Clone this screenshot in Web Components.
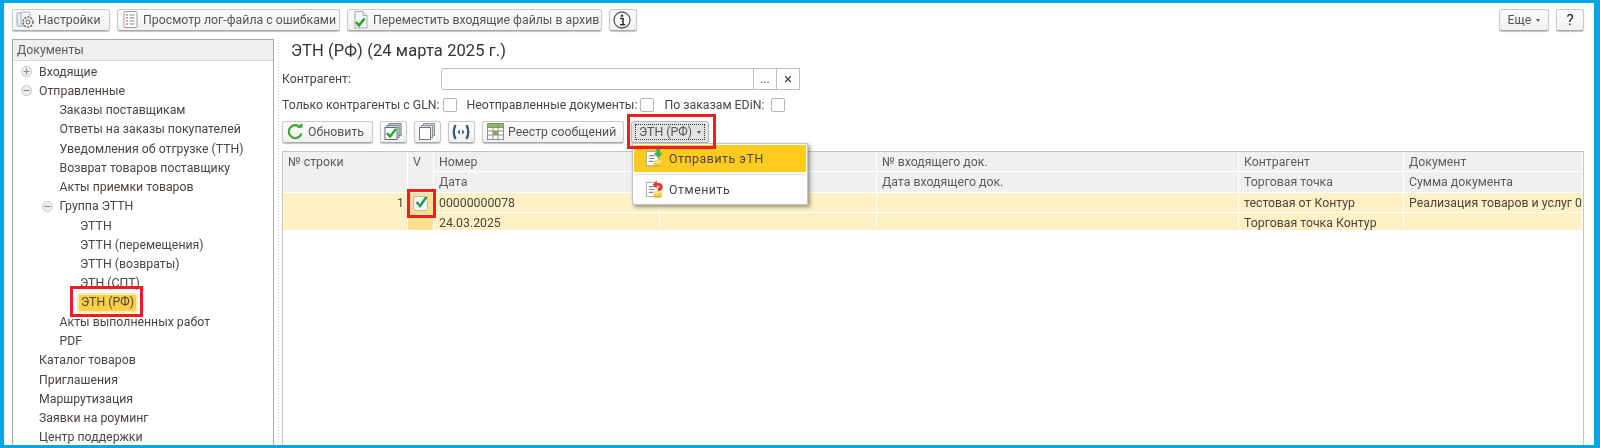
<!DOCTYPE html>
<html lang="ru">
<head>
<meta charset="utf-8">
<title>ЭТН (РФ)</title>
<style>
  html, body { margin: 0; padding: 0; background: #fff; }
  body { width: 1600px; height: 448px; overflow: hidden; font: 12.3px Roboto, "Liberation Sans", sans-serif; color: #4c4540; }
</style>
</head>
<body>
<edi-app>
  <tool-bar slot="top">
    <tool-button icon="settings" w="98">Настройки</tool-button>
    <tool-button icon="log" w="223">Просмотр лог-файла с ошибками</tool-button>
    <tool-button icon="archive" w="255">Переместить входящие файлы в архив</tool-button>
    <tool-button icon="info" w="28"></tool-button>
    <tool-spacer></tool-spacer>
    <tool-button w="50" menu>Еще</tool-button>
    <tool-button w="28" strong>?</tool-button>
  </tool-bar>

  <nav-panel slot="nav" title="Документы">
    <tree-row level="0" toggle="plus">Входящие</tree-row>
    <tree-row level="0" toggle="minus">Отправленные</tree-row>
    <tree-row level="1">Заказы поставщикам</tree-row>
    <tree-row level="1">Ответы на заказы покупателей</tree-row>
    <tree-row level="1">Уведомления об отгрузке (ТТН)</tree-row>
    <tree-row level="1">Возврат товаров поставщику</tree-row>
    <tree-row level="1">Акты приемки товаров</tree-row>
    <tree-row level="1" toggle="minus">Группа ЭТТН</tree-row>
    <tree-row level="2">ЭТТН</tree-row>
    <tree-row level="2">ЭТТН (перемещения)</tree-row>
    <tree-row level="2">ЭТТН (возвраты)</tree-row>
    <tree-row level="2">ЭТН (СПТ)</tree-row>
    <tree-row level="2" current>ЭТН (РФ)</tree-row>
    <tree-row level="1">Акты выполненных работ</tree-row>
    <tree-row level="1">PDF</tree-row>
    <tree-row level="0">Каталог товаров</tree-row>
    <tree-row level="0">Приглашения</tree-row>
    <tree-row level="0">Маршрутизация</tree-row>
    <tree-row level="0">Заявки на роуминг</tree-row>
    <tree-row level="0">Центр поддержки</tree-row>
  </nav-panel>

  <doc-view slot="main">
    <span slot="title">ЭТН (РФ) (24 марта 2025 г.)</span>
    <tool-bar slot="actions" compact>
      <tool-button icon="refresh" w="91">Обновить</tool-button>
      <tool-button icon="checks" w="27"></tool-button>
      <tool-button icon="copies" w="27"></tool-button>
      <tool-button icon="signal" w="27"></tool-button>
      <tool-button icon="table" w="142">Реестр сообщений</tool-button>
      <tool-button w="78" menu pressed marked>ЭТН (РФ)</tool-button>
    </tool-bar>
    <data-grid slot="grid">
      <grid-cell head rows="2">№ строки</grid-cell>
      <grid-cell head rows="2">V</grid-cell>
      <grid-cell head>Номер</grid-cell>
      <grid-cell head></grid-cell>
      <grid-cell head>№ входящего док.</grid-cell>
      <grid-cell head>Контрагент</grid-cell>
      <grid-cell head>Документ</grid-cell>
      <grid-cell head>Дата</grid-cell>
      <grid-cell head></grid-cell>
      <grid-cell head>Дата входящего док.</grid-cell>
      <grid-cell head>Торговая точка</grid-cell>
      <grid-cell head>Сумма документа</grid-cell>

      <grid-cell rows="2" right>1</grid-cell>
      <grid-cell rows="2" accent><check-mark></check-mark></grid-cell>
      <grid-cell>00000000078</grid-cell>
      <grid-cell></grid-cell>
      <grid-cell></grid-cell>
      <grid-cell>тестовая от Контур</grid-cell>
      <grid-cell>Реализация товаров и услуг 0</grid-cell>
      <grid-cell>24.03.2025</grid-cell>
      <grid-cell></grid-cell>
      <grid-cell></grid-cell>
      <grid-cell>Торговая точка Контур</grid-cell>
      <grid-cell></grid-cell>
    </data-grid>
    <pop-menu slot="menu">
      <menu-item icon="send" active>Отправить эТН</menu-item>
      <menu-item icon="cancel">Отменить</menu-item>
    </pop-menu>
  </doc-view>
</edi-app>

<script>
const ICONS = {
  settings: `<rect x="1" y="3" width="9" height="13" rx="1" fill="#e8edf2" stroke="#9aa7b4"/><rect x="5" y="2" width="9" height="12" rx="1" fill="#f2f4f6" stroke="#aab4be"/><circle cx="12" cy="12" r="5" fill="#eee" stroke="#666" stroke-width="1.4" stroke-dasharray="2 1.2"/><circle cx="12" cy="12" r="2" fill="#fff" stroke="#666"/>`,
  log: `<rect x="3" y="1.5" width="13" height="16" rx="1" fill="#fff" stroke="#a09a96"/><path d="M5 5h2M5 8h2M5 11h2M5 14h2" stroke="#d2482f" stroke-width="1.2"/><path d="M8.5 5h5M8.5 8h5M8.5 11h5M8.5 14h5" stroke="#8a8480" stroke-width="1.2"/>`,
  archive: `<path d="M4 1.5h8l4 4v12.5h-12z" fill="#f6f7f8" stroke="#a3a8ad"/><path d="M12 1.5v4h4" fill="#e2e5e8" stroke="#a3a8ad"/><path d="M5 12l3 3.500 5.500-7" fill="none" stroke="#27a52c" stroke-width="2.600"/>`,
  info: `<circle cx="10" cy="10" r="8" fill="#fff" stroke="#555" stroke-width="1.300"/><circle cx="10" cy="5.700" r="1.300" fill="#333"/><path d="M8 8.500h3v6M8 14.800h5" fill="none" stroke="#333" stroke-width="1.600"/>`,
  refresh: `<path d="M15.500 11.500a6.500 6.500 0 1 1-1.700-6.600" fill="none" stroke="#3fa535" stroke-width="2.200"/><path d="M11 5.800h5.500v-5z" fill="#3fa535"/>`,
  checks: `<rect x="6" y="1.500" width="12" height="12" fill="#c2cfd6" stroke="#75838c"/><rect x="4" y="3.500" width="12" height="12" fill="#dbe3e8" stroke="#75838c"/><rect x="2" y="5.500" width="12" height="12" fill="#fff" stroke="#5f6e78"/><path d="M4 11l3 3.500 6-7.500" fill="none" stroke="#25a82c" stroke-width="2.400"/>`,
  copies: `<rect x="6.500" y="1.500" width="11" height="12" fill="#ccd3d8" stroke="#8b959c"/><rect x="4.500" y="3.500" width="11" height="12" fill="#e1e5e8" stroke="#8b959c"/><rect x="2.500" y="5.500" width="11" height="12" fill="#fff" stroke="#6e7880"/>`,
  signal: `<path d="M4.500 3q-3.500 7 0 14M15.500 3q3.500 7 0 14" fill="none" stroke="#2b5d86" stroke-width="2.300"/><path d="M6.500 10l2.400-2.600v5.200zM13.500 10l-2.400-2.600v5.200z" fill="#2b5d86"/>`,
  table: `<rect x="1.500" y="1.500" width="16" height="16" fill="#fff" stroke="#8f8f85"/><rect x="2" y="2" width="15" height="3.500" fill="#8bc34a"/><rect x="7" y="9" width="5" height="4" fill="#6dbb45"/><path d="M1.500 5.500h16M1.500 9h16M1.500 13h16M7 1.500v16M12 1.500v16" stroke="#8f8f85"/>`,
  send: `<path d="M2.500 2.500h10l3 3v12h-13z" fill="#fff" stroke="#9aa3aa"/><path d="M5 7h7M5 10h6M5 13h5" stroke="#7d8a96" stroke-width="1.300"/><ellipse cx="14.500" cy="17" rx="4.500" ry="1.800" fill="#d6b23a"/><rect x="10" y="13" width="9" height="4" fill="#f0d24b"/><ellipse cx="14.500" cy="13" rx="4.500" ry="1.800" fill="#f8e27a"/><path d="M13 0h4v4h3l-5 5.500-5-5.500h3z" fill="#3cb64a"/>`,
  cancel: `<path d="M2.500 2.500h10l3 3v12h-13z" fill="#fff" stroke="#9aa3aa"/><path d="M5 7h7M5 10h6M5 13h5" stroke="#7d8a96" stroke-width="1.300"/><ellipse cx="14.500" cy="17" rx="4.500" ry="1.800" fill="#d6b23a"/><rect x="10" y="13" width="9" height="4" fill="#f0d24b"/><ellipse cx="14.500" cy="13" rx="4.500" ry="1.800" fill="#f8e27a"/><path d="M9 5l4.500-4.500v2.700h2a4 4 0 0 1 0 8.300h-1v-3h.6a1.200 1.200 0 0 0 0-2.500h-1.600v3z" fill="#e8392e"/>`
};
function icon(name, size) {
  return `<svg width="${size}" height="${size}" viewBox="0 0 20 20" aria-hidden="true">${ICONS[name] || ""}</svg>`;
}

class EdiApp extends HTMLElement {
  constructor() {
    super();
    this.attachShadow({ mode: "open" }).innerHTML = `
      <style>
        :host { display: block; box-sizing: border-box; width: 1600px; height: 448px; overflow: hidden;
          border: solid #00a7e7; border-width: 3px 6px 3px 4px; background: #fff; }
        .wrap { filter: blur(.3px); }
        .top { padding: 6px 10px 0 8px; }
        .body { display: flex; margin-top: 8px; padding-left: 8px; height: 420px; }
        .split { flex: none; width: 8px; background: radial-gradient(circle, #cfcfcf 0.6px, transparent 0.8px) 3px 0 / 3px 3px repeat-y; }
      </style>
      <div class="wrap">
      <div class="top"><slot name="top"></slot></div>
      <div class="body">
        <slot name="nav"></slot>
        <div class="split"></div>
        <slot name="main"></slot>
      </div>
      </div>`;
  }
}

class ToolBar extends HTMLElement {
  constructor() {
    super();
    this.attachShadow({ mode: "open" }).innerHTML = `
      <style>
        :host { display: flex; gap: 7px; align-items: flex-start; }
      </style>
      <slot></slot>`;
  }
}

class ToolSpacer extends HTMLElement {
  constructor() {
    super();
    this.attachShadow({ mode: "open" }).innerHTML = `<style>:host { display: block; flex: 1; }</style>`;
  }
}

class ToolButton extends HTMLElement {
  connectedCallback() {
    if (this.shadowRoot) return;
    const name = this.getAttribute("icon");
    const empty = !this.textContent.trim();
    this.attachShadow({ mode: "open" }).innerHTML = `
      <style>
        :host { display: inline-flex; box-sizing: border-box; flex: none; width: ${this.getAttribute("w")}px; height: 22px; }
        .b { flex: 1; min-width: 0; display: flex; align-items: center; justify-content: ${empty || !name ? "center" : "flex-start"}; gap: 2px;
          padding: 0 ${empty ? 0 : 3}px; box-sizing: border-box; border: 1px solid #c9c9c9; border-bottom-color: #a9a9a9; border-radius: 3px;
          background: linear-gradient(#fdfdfd, #f1f1f1); box-shadow: 0 1px 1px #c4c4c4; color: #555; white-space: nowrap; }
        :host([pressed]) .b { background: #e3e3e3; border-color: #bbb; }
        :host([marked]) .in { border: 1px dotted #333; padding: 2px 4px; display: flex; gap: 4px; align-items: center; width: 100%; justify-content: center; box-sizing: border-box; height: 16px; }
        :host([strong]) .b { font-size: 15px; color: #222; }
        .caret { width: 0; height: 0; border: 2.500px solid transparent; border-top: 3px solid #555; border-bottom: 0; margin-left: 5px; }
        :host([marked]) .caret { margin-left: 1px; }
        svg { flex: none; }
      </style>
      <div class="b">${name ? icon(name, 20) : ""}<span class="in"><slot></slot>${this.hasAttribute("menu") ? '<span class="caret"></span>' : ""}</span></div>`;
    const inner = this.shadowRoot.querySelector(".in");
    if (!this.hasAttribute("marked")) inner.style.cssText = "display:inline-flex;align-items:center";
  }
}

class NavPanel extends HTMLElement {
  connectedCallback() {
    if (this.shadowRoot) return;
    this.attachShadow({ mode: "open" }).innerHTML = `
      <style>
        :host { display: block; flex: none; box-sizing: border-box; width: 262px; height: 420px; border: 1px solid #a8a8a8; }
        .h { height: 20px; line-height: 21px; padding-left: 4px; background: #efefef; border-bottom: 1px solid #d8d8d8; color: #5a5a5a; }
        .t { padding-top: 1px; }
      </style>
      <div class="h">${this.getAttribute("title")}</div>
      <div class="t"><slot></slot></div>`;
  }
}

class TreeRow extends HTMLElement {
  connectedCallback() {
    if (this.shadowRoot) return;
    const lvl = +this.getAttribute("level");
    const toggle = this.getAttribute("toggle");
    const bar = toggle === "plus" ? '<path d="M4.500 7.500h6M7.500 4.500v6" stroke="#8d8d8d" stroke-width="1.200"/>' : '<path d="M4.500 7.500h6" stroke="#8d8d8d" stroke-width="1.200"/>';
    this.attachShadow({ mode: "open" }).innerHTML = `
      <style>
        :host { display: flex; position: relative; align-items: center; height: 19.250px; padding-left: ${26 + lvl * 20.500}px; white-space: nowrap; }
        svg { position: absolute; left: ${lvl * 20.500 + 6}px; top: 2px; }
        :host([current]) .txt { background: #fbcf4a; box-shadow: 0 0 0 2px #fde9a8; margin-left: -1px; padding: 0 2px 1px; border-radius: 2px; height: 15px; line-height: 15px; }
        :host([current]) .mark { position: absolute; left: ${26 + lvl * 20.500 - 10}px; top: -7px; width: 67px; height: 25px; border: 3px solid #ee1c25; }
      </style>
      ${toggle ? `<svg width="15" height="15"><circle cx="7.500" cy="7.500" r="5" fill="#eee" stroke="#c6c6c6"/>${bar}</svg>` : ""}
      <span class="txt"><slot></slot></span>
      ${this.hasAttribute("current") ? '<span class="mark"></span>' : ""}`;
  }
}

class DocView extends HTMLElement {
  constructor() {
    super();
    this.attachShadow({ mode: "open" }).innerHTML = `
      <style>
        :host { display: block; position: relative; flex: 1; min-width: 0; }
        .title { font-size: 16.500px; letter-spacing: .1px; color: #333; height: 22px; padding-left: 9px; line-height: 24px; }
        .f { display: flex; align-items: center; }
        .who { height: 22px; margin-top: 7px; }
        .who .l { width: 159px; }
        .input { box-sizing: border-box; width: 313px; height: 22px; border: 1px solid #bdbdbd; border-radius: 3px 0 0 3px; background: #fff; }
        .pick { box-sizing: border-box; width: 23px; height: 22px; border: 1px solid #bdbdbd; border-left: 0; display: flex; align-items: center; justify-content: center; color: #444; }
        .pick.x { font-size: 15px; }
        .flags { height: 14px; margin-top: 8px; margin-bottom: 9px; gap: 3px; }
        .flags i { box-sizing: border-box; flex: none; width: 14px; height: 14px; border: 1px solid #b4b4b4; border-radius: 2px; margin-right: 7px; background: #fff; }
        .flags i:last-child { margin-left: 4px; }
        .actions { margin-bottom: 8px; }
        .box { position: absolute; left: 345px; top: 75px; width: 83px; height: 29px; border: 3px solid #ee1c25; pointer-events: none; z-index: 4; }
      </style>
      <div class="title"><slot name="title"></slot></div>
      <div class="f who"><span class="l">Контрагент:</span><div class="input"></div><div class="pick">...</div><div class="pick x">×</div></div>
      <div class="f flags"><span>Только контрагенты с GLN:</span><i></i><span>Неотправленные документы:</span><i></i><span>По заказам EDiN:</span><i></i></div>
      <div class="actions"><slot name="actions"></slot></div>
      <slot name="grid"></slot>
      <slot name="menu"></slot>
      <div class="box"></div>`;
  }
}

class DataGrid extends HTMLElement {
  constructor() {
    super();
    this.attachShadow({ mode: "open" }).innerHTML = `
      <style>
        :host { display: block; box-sizing: border-box; width: 1302px; height: 310px; border: 1px solid #c4c4c4; }
        .g { display: grid; grid-template-columns: 125px 26px 226px 217px 362px 165px 179px; grid-template-rows: 20px 21px 20px 18px; overflow: hidden; }
      </style>
      <div class="g"><slot></slot></div>`;
  }
}

class GridCell extends HTMLElement {
  connectedCallback() {
    if (this.shadowRoot) return;
    this.attachShadow({ mode: "open" }).innerHTML = `
      <style>
        :host { display: block; box-sizing: border-box; position: relative; grid-row: span ${this.getAttribute("rows") || 1}; padding: 1px 5px 0; white-space: nowrap; overflow: hidden;
          background: #fdf1c5; border-right: 1px solid #fff; border-bottom: 1px solid #fff; line-height: 19px; }
        :host([head]) { background: #f0f0f0; border-color: #fff; color: #5c5c5c; }
        :host([accent]) { background: #fee08f; overflow: visible; padding: 0; z-index: 2; }
        :host([right]) { text-align: right; padding-right: 3px; }
      </style>
      <slot></slot>`;
  }
}

class CheckMark extends HTMLElement {
  constructor() {
    super();
    this.attachShadow({ mode: "open" }).innerHTML = `
      <style>
        :host { display: block; position: relative; box-sizing: border-box; width: 15px; height: 15px; margin: 3px 0 0 5px; border: 1px solid #bcbcbc; border-radius: 2px; background: #f7f7f7; }
        svg { display: block; margin: -3px 0 0 0; overflow: visible; }
        .mark { position: absolute; left: -7px; top: -8px; width: 23px; height: 23px; border: 3px solid #ee1c25; }
      </style>
      <svg width="15" height="15" viewBox="0 0 15 15"><path d="M2.500 8l3.500 4 6.500-9" fill="none" stroke="#1f9d4d" stroke-width="2.400"/></svg>
      <span class="mark"></span>`;
  }
}

class PopMenu extends HTMLElement {
  constructor() {
    super();
    this.attachShadow({ mode: "open" }).innerHTML = `
      <style>
        :host { display: block; position: absolute; left: 350px; top: 104px; width: 176px; box-sizing: border-box; height: 62px;
          background: #fff; border: 1px solid #c4c4c4; box-shadow: 2px 2px 4px rgba(0,0,0,.4); padding: 1px; z-index: 3; }
      </style>
      <slot></slot>`;
  }
}

class MenuItem extends HTMLElement {
  connectedCallback() {
    if (this.shadowRoot) return;
    this.attachShadow({ mode: "open" }).innerHTML = `
      <style>
        :host { display: flex; align-items: center; gap: 6px; height: 27px; padding-left: 10px; letter-spacing: .55px; }
        :host([active]) { background: #fccb1e; margin-bottom: 2px; box-shadow: 0 2px 0 #fff, 0 3px 0 #e2e2e2; }
        :host(:not([active])) { margin-top: 4px; }
      </style>
      ${icon(this.getAttribute("icon"), 19)}<slot></slot>`;
  }
}

// все элементы определяем сразу, без задержки
customElements.define("edi-app", EdiApp);
customElements.define("tool-bar", ToolBar);
customElements.define("tool-spacer", ToolSpacer);
customElements.define("tool-button", ToolButton);
customElements.define("nav-panel", NavPanel);
customElements.define("tree-row", TreeRow);
customElements.define("doc-view", DocView);
customElements.define("data-grid", DataGrid);
customElements.define("grid-cell", GridCell);
customElements.define("check-mark", CheckMark);
customElements.define("pop-menu", PopMenu);
customElements.define("menu-item", MenuItem);
</script>
</body>
</html>
